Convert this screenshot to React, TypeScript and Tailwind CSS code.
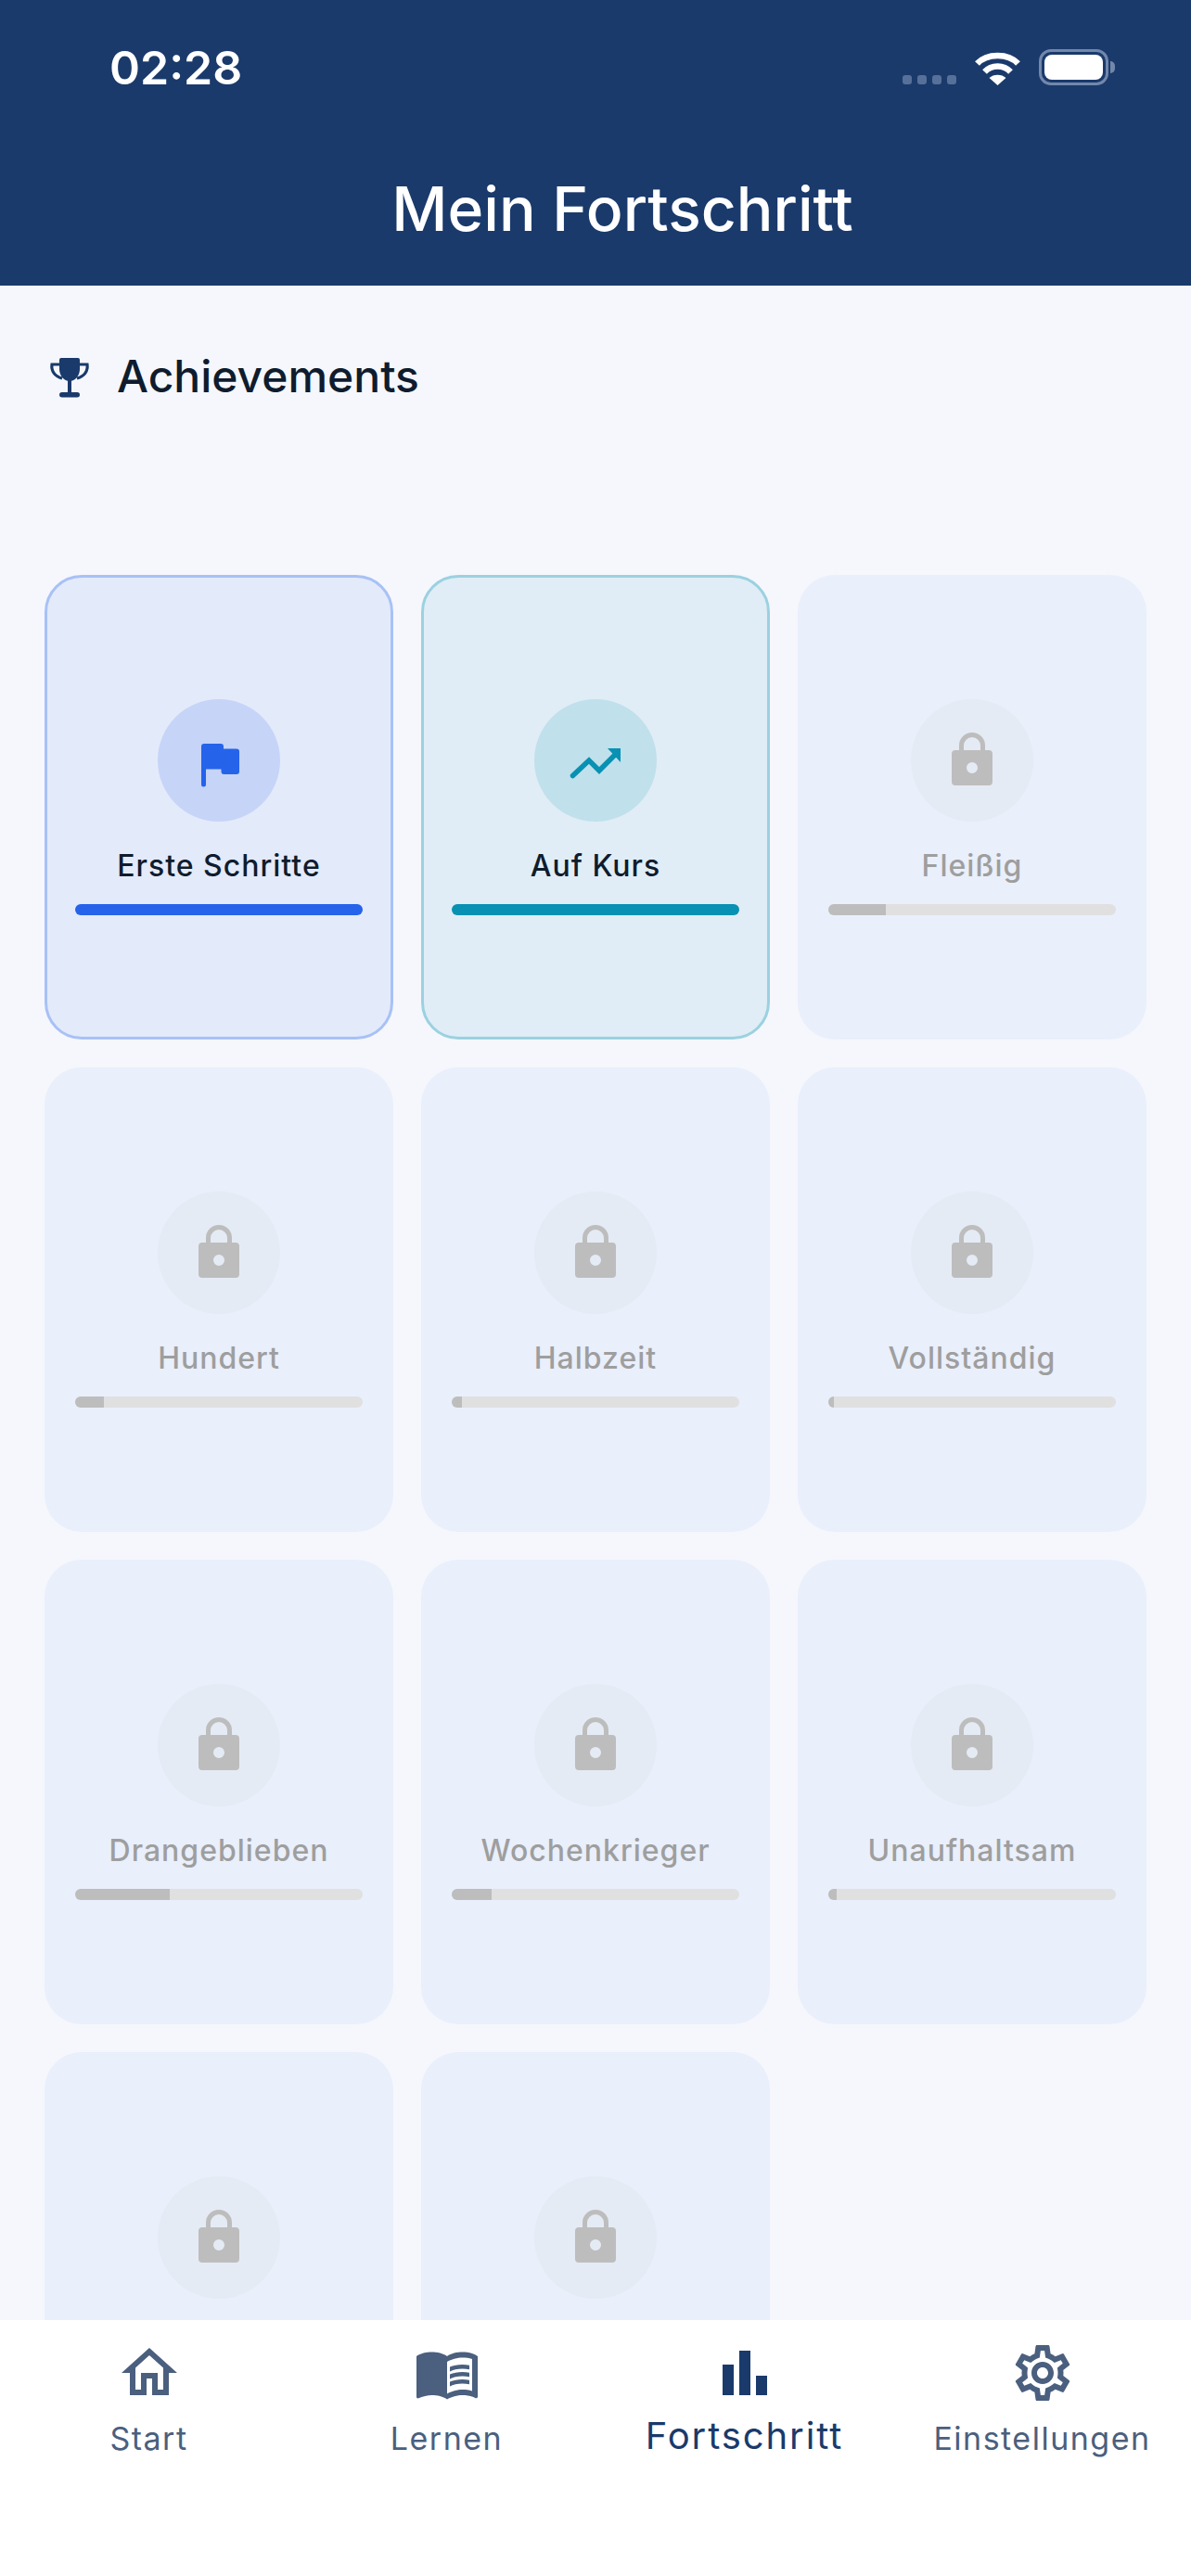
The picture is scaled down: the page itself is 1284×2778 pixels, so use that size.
import { MdBarChart, MdMenuBook, MdOutlineHome, MdOutlineSettings } from "react-icons/md";

const FONT = "font-['Inter','Liberation_Sans',sans-serif]";

function WifiIcon() {
  return (
    <svg width="49" height="37" viewBox="0 0 49 37" fill="none">
      <path d="M2.5 13.5C13 2 36 2 46.5 13.5" stroke="#fff" strokeWidth="6.5" />
      <path d="M10.5 22.5C18 14.5 31 14.5 38.5 22.5" stroke="#fff" strokeWidth="6.5" />
      <path d="M24.5 37L15.5 29C20 24.5 29 24.5 33.5 29Z" fill="#fff" />
    </svg>
  );
}

function TrophyIcon() {
  return (
    <svg width="70" height="60" viewBox="0 0 70 60" fill="#1a3a6b">
      <path d="M24 12a2 2 0 0 1 2-2h18a2 2 0 0 1 2 2v10c0 7-5 13-11 13s-11-6-11-13z" />
      <path d="M25 17h-9c-1 7 3 13 11 15M45 17h9c1 7-3 13-11 15" fill="none" stroke="#1a3a6b" strokeWidth="3.2" />
      <path d="M33 33h4v15h-4z" />
      <rect x="24" y="47" width="22" height="5.5" rx="2.75" />
    </svg>
  );
}

function FlagIcon() {
  return (
    <svg width="70" height="70" viewBox="1 0 70 70" fill="#2563eb">
      <path d="M17 20a3 3 0 0 1 3-3h18a3 3 0 0 1 3 3v2.500h14a3 3 0 0 1 3 3V47a3 3 0 0 1-3 3H41.500a3 3 0 0 1-3-3v-2.500H22V61a2.500 2.500 0 0 1-5 0z" />
    </svg>
  );
}

function TrendIcon() {
  return (
    <svg width="80" height="60" viewBox="2 0 80 60" fill="none">
      <path d="M17.500 46.500L35 30l11 11L63 24" stroke="#0891b2" strokeWidth="5.500" strokeLinecap="round" strokeLinejoin="miter" />
      <path d="M55 17h14v15z" fill="#0891b2" />
    </svg>
  );
}

function LockIcon() {
  return (
    <svg width="60" height="60" viewBox="0 0 60 60" fill="none">
      <path d="M18.500 20v-6a11.500 11.500 0 0 1 23 0v6" stroke="#bdbdbd" strokeWidth="5" />
      <path
        fillRule="evenodd"
        d="M12 19h36a4 4 0 0 1 4 4v30a4 4 0 0 1-4 4H12a4 4 0 0 1-4-4V23a4 4 0 0 1 4-4zM30 32a6 6 0 1 0 0 12a6 6 0 1 0 0-12z"
        fill="#bdbdbd"
      />
    </svg>
  );
}

const locked = [
  { label: "Fleißig", progress: 20 },
  { label: "Hundert", progress: 10 },
  { label: "Halbzeit", progress: 3.5 },
  { label: "Vollständig", progress: 2 },
  { label: "Drangeblieben", progress: 33 },
  { label: "Wochenkrieger", progress: 14 },
  { label: "Unaufhaltsam", progress: 3 },
  { label: "\u00a0", progress: 0 },
  { label: "\u00a0", progress: 0 },
];

function EarnedCard({ kind }: { kind: "flag" | "trend" }) {
  const flag = kind === "flag";
  return (
    <div
      className={`flex h-[501px] flex-col items-center justify-center rounded-[40px] border-[3px] px-[30px] ${
        flag ? "border-[#a8c1f6] bg-[#e3eafa]" : "border-[#9bd1e1] bg-[#e0edf6]"
      }`}
    >
      <div
        className={`flex size-[132px] items-center justify-center rounded-full ${
          flag ? "bg-[#c6d4f8]" : "bg-[#c0e0eb]"
        }`}
      >
        {flag ? <FlagIcon /> : <TrendIcon />}
      </div>
      <div className="mt-[28px] text-[32px] leading-[40px] font-medium tracking-[1px] text-[#0f1c2e]">
        {flag ? "Erste Schritte" : "Auf Kurs"}
      </div>
      <div className={`mt-[21px] h-[12px] w-full rounded-full ${flag ? "bg-[#2563eb]" : "bg-[#0891b2]"}`} />
    </div>
  );
}

function LockedCard({ label, progress }: { label: string; progress: number }) {
  return (
    <div className="flex h-[501px] flex-col items-center justify-center rounded-[40px] bg-[#e9effb] px-[33px]">
      <div className="flex size-[132px] items-center justify-center rounded-full bg-[#e5ebf5]">
        <LockIcon />
      </div>
      <div className="mt-[28px] text-[32px] leading-[40px] font-medium tracking-[1px] text-[#9e9e9e]">{label}</div>
      <div className="mt-[21px] h-[12px] w-full overflow-hidden rounded-full bg-[#e0e0e0]">
        <div className="h-full bg-[#bdbdbd]" style={{ width: `${progress}%` }} />
      </div>
    </div>
  );
}

const tabs = [
  { label: "Start", Icon: MdOutlineHome },
  { label: "Lernen", Icon: MdMenuBook },
  { label: "Fortschritt", Icon: MdBarChart, active: true },
  { label: "Einstellungen", Icon: MdOutlineSettings },
];

export default function App() {
  return (
    <div className={`flex h-[2778px] w-[1284px] flex-col overflow-hidden bg-[#f5f7fc] ${FONT}`}>
      <header className="h-[308px] shrink-0 bg-[#1a3a6b] text-white">
        <div className="flex h-[185px] items-start justify-between pt-[44px] pr-[82px] pl-[118px]">
          <span className="text-[50px] leading-[58px] font-semibold">02:28</span>
          <div className="flex items-end gap-[20px] pt-[9px]">
            <div className="flex gap-[6px] pb-[1px]">
              <span className="size-[10px] rounded-[3px] bg-[#56709a]" />
              <span className="size-[10px] rounded-[3px] bg-[#56709a]" />
              <span className="size-[10px] rounded-[3px] bg-[#56709a]" />
              <span className="size-[10px] rounded-[3px] bg-[#56709a]" />
            </div>
            <WifiIcon />
            <div className="flex items-center gap-[2px]">
              <div className="h-[39px] w-[75px] rounded-[13px] border-[3px] border-[#7287ab] p-[3px]">
                <div className="size-full rounded-[8px] bg-white" />
              </div>
              <div className="h-[13px] w-[5px] rounded-r-full bg-[#7287ab]" />
            </div>
          </div>
        </div>
        <h1 className="pl-[58px] text-center text-[66px] leading-[80px] font-medium">Mein Fortschritt</h1>
      </header>

      <main className="min-h-0 flex-1 overflow-hidden px-[48px]">
        <div className="flex h-[312px] items-start pt-[66px]">
          <div className="-ml-[8px] flex items-center gap-[16px]">
            <TrophyIcon />
            <h2 className="text-[48px] leading-[64px] font-medium text-[#0f1c2e]">Achievements</h2>
          </div>
        </div>
        <div className="grid grid-cols-3 gap-[30px]">
          <EarnedCard kind="flag" />
          <EarnedCard kind="trend" />
          {locked.map((item, i) => (
            <LockedCard key={i} label={item.label} progress={item.progress} />
          ))}
        </div>
      </main>

      <nav className="grid h-[276px] shrink-0 grid-cols-4 bg-white pt-[21px]">
        {tabs.map(({ label, Icon, active }) => (
          <div key={label} className={`flex flex-col items-center ${active ? "text-[#1a3a6b]" : "text-[#4b5f7e]"}`}>
            <Icon size={72} />
            <span
              className={
                active
                  ? "mt-[8px] text-[40px] leading-[48px] tracking-[1.9px]"
                  : "mt-[13px] text-[34px] leading-[44px] tracking-[1.5px]"
              }
            >
              {label}
            </span>
          </div>
        ))}
      </nav>
    </div>
  );
}
